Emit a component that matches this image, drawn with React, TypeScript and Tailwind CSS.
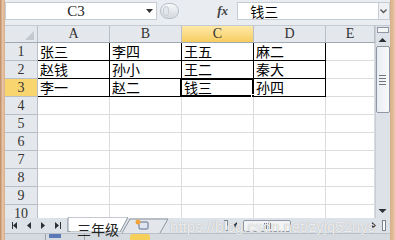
import React from "react";

const cols = ["A", "B", "C", "D", "E"];
const colW = ["w-[72px]", "w-[72px]", "w-[72px]", "w-[72px]", "w-[49px]"];
const data: string[][] = [
  ["张三", "李四", "王五", "麻二"],
  ["赵钱", "孙小", "王二", "秦大"],
  ["李一", "赵二", "钱三", "孙四"],
];

const cellFont = { fontFamily: '"Noto Sans CJK SC", "Noto Sans", sans-serif' };
const headFont = { fontFamily: '"Liberation Serif", "DejaVu Serif", serif' };

function Cell({ r, c }: { r: number; c: number }) {
  const inTable = r < 3 && c < 4;
  const text = inTable ? data[r][c] : "";
  const selected = r === 2 && c === 2;
  return (
    <div
      className={`relative h-[18px] shrink-0 border-b border-r ${colW[c]} ${
        inTable ? "border-black" : "border-[#dadcdd]"
      } bg-white pl-[2px] text-[14px] leading-[17px] text-black`}
      style={cellFont}
    >
      {text}
      {selected && (
        <>
          <div className="absolute -left-[2px] -top-[1px] bottom-[-1px] right-[-1px] border-2 border-black" />
          <div className="absolute -bottom-[3px] -right-[3px] h-[5px] w-[5px] border border-white bg-black" />
        </>
      )}
    </div>
  );
}

// small triangle arrows, drawn
function Tri({ dir, bar }: { dir: "l" | "r" | "u" | "d"; bar?: boolean }) {
  const paths = {
    l: "M6 1 L2 4.5 L6 8 Z",
    r: "M2 1 L6 4.5 L2 8 Z",
    u: "M0.5 6 L4.5 2 L8.5 6 Z",
    d: "M0.5 2 L4.5 6 L8.5 2 Z",
  };
  return (
    <svg width="9" height="9" viewBox="0 0 9 9" className="shrink-0">
      <path d={paths[dir]} fill="#2b2f36" />
      {bar && dir === "l" && <rect x="1" y="1" width="1" height="7" fill="#2b2f36" />}
      {bar && dir === "r" && <rect x="7" y="1" width="1" height="7" fill="#2b2f36" />}
    </svg>
  );
}

export default function App() {
  return (
    <div className="flex h-[240px] w-[395px] overflow-hidden bg-[#dfe3e8]">
      <div className="w-[5px] shrink-0 bg-gradient-to-r from-[#b98a64] via-[#e8c3a4] to-[#d8b08e]" />
      <div className="flex w-[385px] flex-col">
        {/* formula bar */}
        <div className="flex h-[26px] shrink-0 items-start border-b border-[#c5cbd3] bg-[#e9ecf0] pt-[2px]">
          <div className="flex h-[18px] w-[157px] items-center justify-between border border-[#c6ccd4] bg-white pr-[3px]">
            <span className="w-[140px] text-center text-[15px] text-[#222]" style={headFont}>
              C3
            </span>
            <svg width="7" height="4" viewBox="0 0 7 4">
              <path d="M0 0 L7 0 L3.5 4 Z" fill="#333" />
            </svg>
          </div>
          <div className="ml-[3px] mt-[1px] flex h-[16px] w-[20px] items-center justify-start rounded-full border border-[#b8bfc8] bg-gradient-to-b from-[#f7f8fa] to-[#d3d8de] pl-[2px]">
            <div className="h-[10px] w-[6px] rounded-full border border-[#c8ced5] bg-[#e2e6ea]" />
          </div>
          <div className="flex h-[18px] flex-1 items-center">
            <span className="ml-[38px] w-[20px] text-[13px] font-bold italic text-[#444]" style={headFont}>
              fx
            </span>
          </div>
          <div
            className="flex h-[18px] w-[147px] items-center border-y border-l border-[#c6ccd4] bg-white pl-[12px] text-[14px]"
            style={cellFont}
          >
            钱三
          </div>
          <div className="flex h-[18px] w-[13px] items-center justify-center border border-[#c6ccd4] bg-[#eef0f3]">
            <svg width="7" height="5" viewBox="0 0 7 5">
              <path d="M0.5 0.5 L3.5 3.5 L6.5 0.5" fill="none" stroke="#555" strokeWidth="1.4" />
            </svg>
          </div>
        </div>

        {/* sheet */}
        <div className="flex h-[192px] shrink-0">
          <div className="h-[192px] w-[370px] overflow-hidden bg-white">
            <div className="flex h-[17px] border-b border-[#9fa9b4]">
              <div className="relative w-[33px] shrink-0 border-r border-[#b7bec6] bg-[#e4e8ec]">
                <div
                  className="absolute bottom-[2px] right-[3px] h-[9px] w-[9px] bg-[#c3c8ce]"
                  style={{ clipPath: "polygon(100% 0, 100% 100%, 0 100%)" }}
                />
              </div>
              {cols.map((c, i) => (
                <div
                  key={c}
                  className={`${colW[i]} shrink-0 border-r border-[#b7bec6] text-center text-[14px] leading-[16px] text-[#333] ${
                    i === 2 ? "bg-gradient-to-b from-[#fde9a8] to-[#f8cd5e]" : "bg-[#e4e8ec]"
                  }`}
                  style={headFont}
                >
                  {c}
                </div>
              ))}
            </div>
            {Array.from({ length: 10 }).map((_, r) => (
              <div key={r} className="flex">
                <div
                  className={`h-[18px] w-[33px] shrink-0 border-b border-r border-[#b7bec6] text-center text-[14px] leading-[17px] text-[#333] ${
                    r === 2 ? "bg-[#f9d56f]" : "bg-[#e4e8ec]"
                  }`}
                  style={headFont}
                >
                  {r + 1}
                </div>
                {cols.map((_, c) => (
                  <Cell key={c} r={r} c={c} />
                ))}
              </div>
            ))}
          </div>
          {/* vertical scrollbar */}
          <div className="flex w-[14px] shrink-0 flex-col items-center border-l border-[#c9ced5] bg-[#dde2e8]">
            <div className="mt-[1px] h-[6px] w-[12px] border border-[#8e98a4] bg-[#f2f4f6]" />
            <div className="mt-[3px]">
              <Tri dir="u" />
            </div>
            <div className="mt-[1px] flex h-[67px] w-[14px] flex-col items-center justify-center gap-[2px] rounded-[2px] border border-[#8e98a4] bg-gradient-to-r from-[#e9edf1] to-[#f8f9fb]">
              <div className="h-px w-[7px] bg-[#6f7884]" />
              <div className="h-px w-[7px] bg-[#6f7884]" />
              <div className="h-px w-[7px] bg-[#6f7884]" />
              <div className="h-px w-[7px] bg-[#6f7884]" />
            </div>
            <div className="flex-1" />
            <div className="mb-[2px]">
              <Tri dir="d" />
            </div>
          </div>
        </div>

        {/* tab bar */}
        <div className="relative flex h-[15px] shrink-0 items-start bg-[#dde2e8]">
          <div className="flex h-[14px] w-[63px] items-center justify-around border-r border-[#a9b1bb] px-[3px]">
            <Tri dir="l" bar />
            <Tri dir="l" />
            <Tri dir="r" />
            <Tri dir="r" bar />
          </div>
          <div className="relative -mt-px h-[15px] w-[60px] shrink-0">
            <svg className="absolute inset-0" width="60" height="15" viewBox="0 0 60 15">
              <path d="M0 0 L0 14 L3 15 L52 15 L60 0 Z" fill="#ffffff" stroke="#8d96a1" strokeWidth="1" />
            </svg>
            <span className="relative ml-[9px] text-[14px] leading-[15px] text-[#222]" style={cellFont}>
              三年级
            </span>
          </div>
          <div className="relative -ml-[6px] h-[15px] w-[46px] shrink-0">
            <svg className="absolute inset-0" width="46" height="15" viewBox="0 0 46 15">
              <path d="M0 15 L8 1 L46 1 L38 15" fill="#e3e7ec" stroke="#8d96a1" strokeWidth="1" />
              <rect x="17" y="4" width="9" height="7" rx="1" fill="#dfe6f1" stroke="#5c6f8a" strokeWidth="1" />
              <circle cx="16" cy="4" r="2.5" fill="#f2a43a" />
            </svg>
          </div>
          <div className="ml-[56px] mt-[1px] flex h-[13px] flex-1 items-center gap-[3px]">
            <div className="h-[11px] w-[4px] border border-[#7a838e] bg-white" />
            <Tri dir="l" />
            <div className="flex h-[12px] w-[48px] items-center justify-center gap-[1px] rounded-[2px] border border-[#8e98a4] bg-[#f2f4f6]">
              <div className="h-[6px] w-px bg-[#6f7884]" />
              <div className="h-[6px] w-px bg-[#6f7884]" />
              <div className="h-[6px] w-px bg-[#6f7884]" />
              <div className="h-[6px] w-px bg-[#6f7884]" />
            </div>
            <div className="flex-1" />
            <Tri dir="r" />
            <div className="mr-[4px] h-[11px] w-[4px] border border-[#7a838e] bg-white" />
          </div>
          <div
            className="pointer-events-none absolute left-[165px] top-[-2px] text-[15px] text-white/80"
            style={{ fontFamily: '"Liberation Sans", Arial, sans-serif', textShadow: "0 0 1px #999" }}
          >
            https://blog.csdn.net/zyjq52uys
          </div>
        </div>

        {/* status bar */}
        <div className="flex h-[7px] shrink-0 items-start gap-[1px] border-t border-[#b9c0c8] bg-[#d5dae0]">
          <div className="ml-[40px] h-[6px] w-px bg-[#9aa3ad]" />
          <div className="ml-[2px] h-[4px] w-[12px] bg-[#5b79b6]" />
          <div className="ml-[22px] h-[6px] w-px bg-[#9aa3ad]" />
          <div className="ml-[44px] h-[6px] w-[20px] rounded-t-[3px] bg-[#f6cf5a]" />
        </div>
      </div>
      <div className="w-[5px] shrink-0 bg-gradient-to-r from-[#d7ad88] to-[#e9c8a8]" />
    </div>
  );
}
